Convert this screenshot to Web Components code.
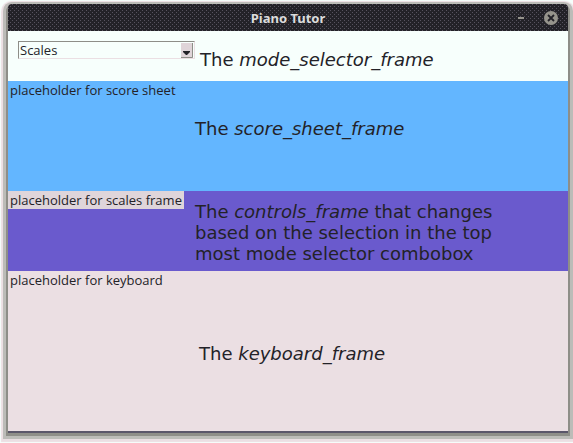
<!DOCTYPE html>
<html lang="en">
<head>
<meta charset="utf-8">
<title>Piano Tutor</title>
<style>
html, body { height: 100%; }
body { margin: 0; background: #f7fffc; font: 13px/18px "Open Sans", "Noto Sans", sans-serif; color: #232228; }
</style>
</head>
<body>
<app-window heading="Piano Tutor">
  <mode-selector><span>The <em>mode_selector_frame</em></span></mode-selector>
  <app-frame class="score" label="placeholder for score sheet"><span>The <em>score_sheet_frame</em></span></app-frame>
  <app-frame class="controls" label="placeholder for scales frame"><span>The <em>controls_frame</em> that changes<br>based on the selection in the top<br>most mode selector combobox</span></app-frame>
  <app-frame class="keyboard" label="placeholder for keyboard"><span>The <em>keyboard_frame</em></span></app-frame>
</app-window>
<script>
class Base extends HTMLElement {
  render(html) { this.attachShadow({ mode: 'open' }).innerHTML = html; }
}

customElements.define('app-window', class extends Base {
  connectedCallback() {
    this.render(`<style>
:host { display: block; box-sizing: border-box; min-height: 100%; padding: 4px 5px 10px 8px; background: #f7fffc; }
.window { min-height: 427px; display: flex; flex-direction: column; background: #ebdfe3; border-radius: 4px 4px 0 0;
  box-shadow: 0 2px 0 #5a5669, 0 3px 0 2px #8e8e88, 0 3px 0 5px #bcbcb8, 0 4px 1px 7px #ebdfe3; }
header { height: 27px; display: grid; grid-template-columns: 60px 1fr 60px; align-items: center; border-radius: 4px 4px 0 0;
  background: conic-gradient(from 270deg at 1px 1px, #57535f 90deg, transparent 0) 0 0 / 4px 4px,
    conic-gradient(from 270deg at 1px 1px, #57535f 90deg, transparent 0) 2px 2px / 4px 4px, #232228; }
h1 { margin: 0; grid-column: 2; text-align: center; font: 700 13px/18px "Noto Sans", sans-serif; color: #dcdcdc; }
.buttons { display: flex; justify-content: flex-end; gap: 16px; padding-right: 10px; }
button { border: 0; padding: 0; width: 14px; height: 14px; background: none; }
svg { display: block; }
main { flex: 1; display: flex; flex-direction: column; }
</style>
<section class="window">
  <header>
    <h1></h1>
    <div class="buttons">
      <button aria-label="Minimize"><svg width="14" height="14"><path d="M4 6h6v2H4z" fill="#96948c"/></svg></button>
      <button aria-label="Close"><svg width="14" height="14"><circle cx="7" cy="7" r="7" fill="#96948c"/><path d="M4 4l6 6m0-6l-6 6" stroke="#232228" stroke-width="1.8"/></svg></button>
    </div>
  </header>
  <main><slot></slot></main>
</section>`);
    this.shadowRoot.querySelector('h1').textContent = this.getAttribute('heading');
  }
});

const NOTE = `::slotted(span) { font: 18px/21px "DejaVu Sans", sans-serif; color: #232228; }`;

customElements.define('mode-selector', class extends Base {
  connectedCallback() {
    this.render(`<style>
:host { display: flex; align-items: flex-start; gap: 5px; box-sizing: border-box; min-height: 50px; padding: 10px; background: #f7fffc; }
combo-box { width: 177px; }
.note { padding-top: 8px; }
${NOTE}
</style><combo-box></combo-box><div class="note"><slot></slot></div>`);
  }
});

customElements.define('combo-box', class extends Base {
  connectedCallback() {
    this.render(`<style>
:host { display: grid; height: 18px; box-sizing: border-box; border: 1px solid; border-color: #8e8e88 #ebdfe3 #ebdfe3 #8e8e88; }
select, .arrow { grid-area: 1 / 1; }
select { appearance: none; width: 100%; min-width: 0; height: 16px; border: 0; border-radius: 0; outline: 0; padding: 0 14px 0 1px; background: #f7fffc; color: #232228; font: 13px/16px "Open Sans", "Noto Sans", sans-serif; }
.arrow { justify-self: end; pointer-events: none; }
</style>
<select aria-label="Mode"><option>Scales</option><option>Chords</option></select>
<svg class="arrow" width="13" height="16"><path d="M0 1h12v15H0z" fill="#dfd4d8"/><path d="M11.5 1v14.5H0" fill="none" stroke="#8e8e88"/><path d="M2 9h7v1L6 13H5L2 10z" fill="#232228"/></svg>`);
  }
});

customElements.define('app-frame', class extends Base {
  connectedCallback() {
    this.render(`<style>
:host { display: grid; grid-template-columns: 187px 1fr; align-items: start; box-sizing: border-box; }
:host(.score) { min-height: 110px; background: #63b6ff; --top: 37px; }
:host(.controls) { min-height: 80px; background: #6a5acd; --top: 10px; --label: #dfd5da; }
:host(.keyboard) { min-height: 160px; flex: 1; background: #ebdfe3; grid-template-columns: 191px 1fr; --top: 72px; }
.label { justify-self: start; padding: 0 2px; white-space: nowrap; background: var(--label, transparent); }
.note { padding-top: var(--top); }
${NOTE}
</style><div class="label"></div><div class="note"><slot></slot></div>`);
    this.shadowRoot.querySelector('.label').textContent = this.getAttribute('label');
  }
});
</script>
</body>
</html>
